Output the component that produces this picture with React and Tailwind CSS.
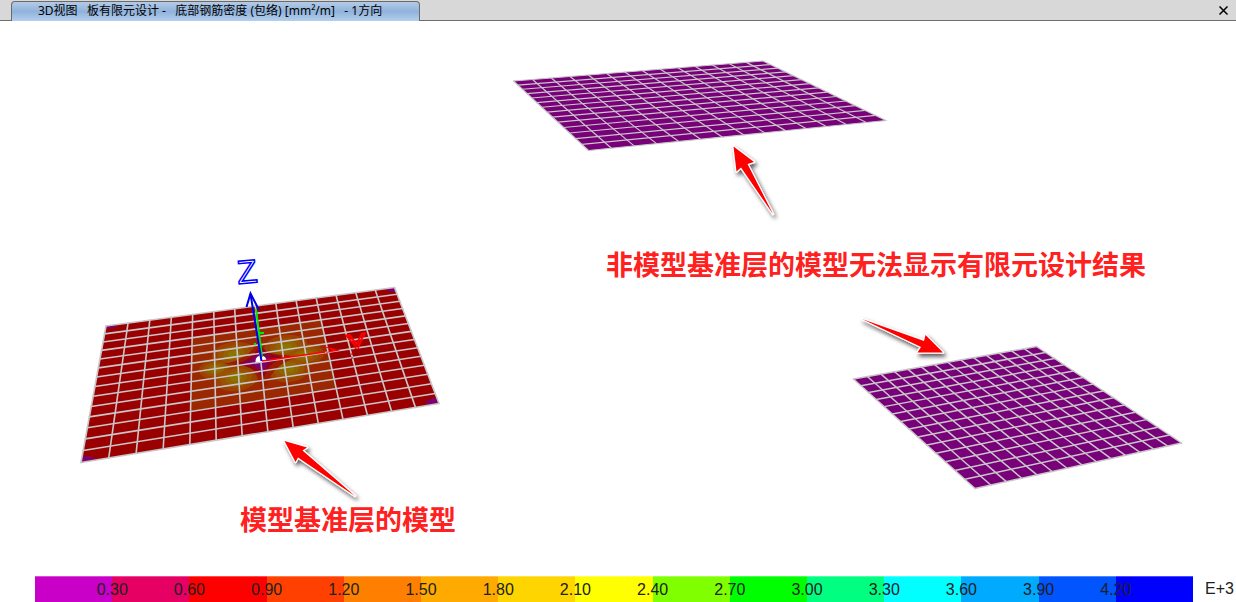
import React from "react";

const DIVISIONS = 14;

// Maps the unit square onto a quadrilateral in perspective.
// Corners run: top-left, top-right, bottom-right, bottom-left.
function perspective([p0, p1, p2, p3]) {
  const dx1 = p1[0] - p2[0];
  const dx2 = p3[0] - p2[0];
  const dx3 = p0[0] - p1[0] + p2[0] - p3[0];
  const dy1 = p1[1] - p2[1];
  const dy2 = p3[1] - p2[1];
  const dy3 = p0[1] - p1[1] + p2[1] - p3[1];
  const det = dx1 * dy2 - dx2 * dy1;
  const g = (dx3 * dy2 - dx2 * dy3) / det;
  const h = (dx1 * dy3 - dx3 * dy1) / det;
  return (u, v) => {
    const w = g * u + h * v + 1;
    return [
      ((p1[0] - p0[0] + g * p1[0]) * u + (p3[0] - p0[0] + h * p3[0]) * v + p0[0]) / w,
      ((p1[1] - p0[1] + g * p1[1]) * u + (p3[1] - p0[1] + h * p3[1]) * v + p0[1]) / w,
    ];
  };
}

const toPoints = (list) => list.map((p) => p.join(",")).join(" ");

function Mesh({ corners, fill, lineWidth = 1.3, children }) {
  const at = perspective(corners);
  const segments = [];
  for (let i = 0; i <= DIVISIONS; i += 1) {
    const t = i / DIVISIONS;
    segments.push([at(t, 0), at(t, 1)], [at(0, t), at(1, t)]);
  }
  return (
    <g>
      <polygon points={toPoints(corners)} fill={fill} />
      {children}
      <g stroke="#c9c6c9" strokeWidth={lineWidth} strokeLinecap="round">
        {segments.map(([a, b], i) => (
          <line key={i} x1={a[0]} y1={a[1]} x2={b[0]} y2={b[1]} />
        ))}
      </g>
    </g>
  );
}

const BASE = [[106, 326], [394.5, 287.5], [439, 403.5], [81, 462.5]];
const UPPER = [[513.5, 81], [763, 61], [886, 120.5], [588.5, 150.5]];
const RIGHT = [[853.5, 379], [1036.5, 346.5], [1181.5, 443], [975, 488.5]];

const LOBES = [
  [234, 354, 22, 12],
  [216, 369, 17, 10],
  [236, 378, 22, 13],
  [286, 347, 22, 12],
  [304, 355, 20, 11],
  [289, 369, 21, 13],
];
const BANDS = [
  [1, "#9b4200"],
  [0.74, "#995200"],
  [0.5, "#936300"],
  [0.28, "#8c7400"],
];

function ResultContours() {
  const at = perspective(BASE);
  const patch = [[4, 3], [10, 3], [10, 11], [4, 11]].map(([c, r]) => at(c / DIVISIONS, r / DIVISIONS));
  return (
    <g clipPath="url(#base-slab)">
      <polygon points={toPoints(patch)} fill="#9b2800" />
      {BANDS.map(([scale, color]) =>
        LOBES.map(([x, y, rx, ry]) => (
          <ellipse
            key={`${color}-${x}`}
            cx={x}
            cy={y}
            rx={rx * scale}
            ry={ry * scale}
            fill={color}
            transform={`rotate(-7 ${x} ${y})`}
          />
        ))
      )}
      <path d="M259 338 Q260 354 284 355 L300 357 Q274 362 266 386 L261 390 Q257 369 246 366 L224 364 Q250 358 256 344Z" fill="#9b1c00" />
      <path d="M260 342 Q262 354 284 357 Q269 361 263 380 Q259 368 236 364 Q256 359 260 342Z" fill="#920022" />
      <path d="M260 348 Q262 357 275 359 Q265 362 263 374 Q259 365 242 363 Q258 360 260 348Z" fill="#780070" />
      <g fill="#7c0070">
        <ellipse cx="106" cy="326" rx="11" ry="2.5" />
        <ellipse cx="85" cy="462" rx="12" ry="6" />
        <ellipse cx="394" cy="288" rx="9" ry="4" />
        <ellipse cx="438" cy="403" rx="12" ry="5" />
      </g>
    </g>
  );
}

function Axes() {
  return (
    <g fill="none">
      <circle cx="261" cy="361" r="5.5" fill="#fff" clipPath="url(#origin-top)" />
      <path d="M262 357 L256 309" stroke="#00e800" strokeWidth="2" />
      <path d="M257 333h7M254 344h2" stroke="#00e800" strokeWidth="2" />
      <path d="M262 361 L325 352" stroke="#f00" strokeWidth="1.6" />
      <path d="M320 345 L340 350.5 L325 353 L332 350Z" fill="#f00" />
      <path d="M261.5 361 L250.5 294" stroke="#0000e6" strokeWidth="2" />
      <path d="M246.5 307 L250.5 293.5 L259 310" stroke="#0000e6" strokeWidth="2" />
      <text
        x="238"
        y="284"
        transform="rotate(-5 238 284)"
        className="font-['Liberation_Sans',Arial,sans-serif] text-[33px]"
        stroke="#0000ff"
        strokeWidth="1.5"
      >
        Z
      </text>
      <g clipPath="url(#y-visible)">
        <text
          x="348"
          y="356"
          transform="rotate(-7 348 356)"
          className="font-['Liberation_Sans',Arial,sans-serif] text-[30px]"
          stroke="#ff0000"
          strokeWidth="1.8"
        >
          Y
        </text>
      </g>
      <path d="M352 349v10" stroke="#d00000" strokeDasharray="2 2" />
    </g>
  );
}

const ARROWS = [
  [[733.5, 146.5], [754, 162], [747.5, 164], [773, 214], [741, 167.5], [736.5, 171.5]],
  [[943, 352.5], [925.5, 335], [924, 341], [862, 319], [921, 347], [917.5, 352.5]],
  [[284.5, 441], [307, 447.5], [302.5, 450.5], [355, 496], [298, 457.5], [295.5, 462]],
];

function Scene() {
  return (
    <svg
      viewBox="0 21 1236 555"
      className="block h-auto w-full"
      role="img"
      aria-label="3D视图"
    >
      <defs>
        <clipPath id="base-slab">
          <polygon points={toPoints(BASE)} />
        </clipPath>
        <clipPath id="origin-top">
          <rect x="250" y="350" width="22" height="12" />
        </clipPath>
        <clipPath id="y-visible">
          <rect x="340" y="325" width="35" height="24" />
        </clipPath>
        <filter id="arrow-shadow" x="-30%" y="-30%" width="160%" height="170%">
          <feDropShadow dx="2" dy="3" stdDeviation="2.2" floodColor="#000" floodOpacity="0.65" />
        </filter>
      </defs>

      <Mesh corners={UPPER} fill="#780078" lineWidth={1.2} />
      <Mesh corners={RIGHT} fill="#780078" lineWidth={1.5} />
      <Mesh corners={BASE} fill="#9b0000" lineWidth={1.6}>
        <ResultContours />
      </Mesh>
      <Axes />

      {ARROWS.map((points, i) => (
        <polygon
          key={i}
          points={toPoints(points)}
          fill="#ff0000"
          stroke="#fff"
          strokeWidth="2.4"
          strokeLinejoin="round"
          paintOrder="stroke"
          filter="url(#arrow-shadow)"
        />
      ))}

      <g fill="#ff2020" className="font-['Noto_Sans_CJK_SC',sans-serif] text-[27px] font-bold">
        <text x="606" y="275">非模型基准层的模型无法显示有限元设计结果</text>
        <text x="240" y="530">模型基准层的模型</text>
      </g>
    </svg>
  );
}

const LEGEND = [
  { color: "bg-[#c800c8]", label: "0.30" },
  { color: "bg-[#e60064]", label: "0.60" },
  { color: "bg-[#ff0000]", label: "0.90" },
  { color: "bg-[#ff4000]", label: "1.20" },
  { color: "bg-[#ff8000]", label: "1.50" },
  { color: "bg-[#ffaa00]", label: "1.80" },
  { color: "bg-[#ffd500]", label: "2.10" },
  { color: "bg-[#ffff00]", label: "2.40" },
  { color: "bg-[#80ff00]", label: "2.70" },
  { color: "bg-[#00ff00]", label: "3.00" },
  { color: "bg-[#00ff80]", label: "3.30" },
  { color: "bg-[#00ffff]", label: "3.60" },
  { color: "bg-[#00aaff]", label: "3.90" },
  { color: "bg-[#0055ff]", label: "4.20" },
  { color: "bg-[#0000ff]", label: null },
];

function Legend() {
  return (
    <footer className="flex h-[26px] items-stretch pl-[35px] font-['Liberation_Sans',Arial,sans-serif] text-base leading-[26px] text-[#202020]">
      <ol className="flex flex-1">
        {LEGEND.map(({ color, label }) => (
          <li key={color} className={`relative flex-1 border-t border-white/30 ${color}`}>
            {label && (
              <span className="absolute right-0 z-10 translate-x-1/2">{label}</span>
            )}
          </li>
        ))}
      </ol>
      <span className="w-[43px] pl-3">E+3</span>
    </footer>
  );
}

export default function App() {
  return (
    <div className="flex min-h-screen flex-col overflow-hidden bg-white">
      <header className="flex h-[21px] items-end justify-between border-b border-[#6e6e6e] bg-[#d8d8d8] pl-[11px]">
        <h1 className="-mb-px h-5 w-[409px] rounded-t border border-b-0 border-[#6b6b6b] bg-linear-to-b from-[#b4cbe6] via-[#90b2db] to-[#b4cfee] pl-[26px] font-['Noto_Sans','Noto_Sans_CJK_SC',sans-serif] text-xs leading-[18px] font-normal whitespace-pre text-black">
          {"3D视图   板有限元设计 -   底部钢筋密度 (包络) [mm²/m]   - 1方向"}
        </h1>
        <button type="button" aria-label="关闭" className="flex h-5 w-[26px] items-center justify-center">
          <svg viewBox="0 0 9 9" className="size-[9px]" stroke="#000" strokeWidth="1.5">
            <path d="M0.5 0.5l8 8M8.5 0.5l-8 8" />
          </svg>
        </button>
      </header>
      <main>
        <Scene />
      </main>
      <Legend />
    </div>
  );
}
